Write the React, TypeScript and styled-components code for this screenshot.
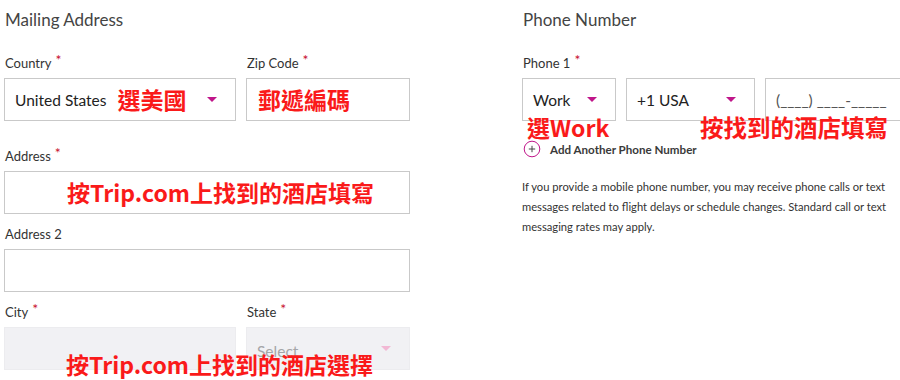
import React from 'react';
import styled, { createGlobalStyle } from 'styled-components';

const GlobalStyle = createGlobalStyle`
  body {
    margin: 0;
    background: #fff;
    font-family: Lato, "Noto Sans", sans-serif;
    color: #333;
  }
`;

const Page = styled.div`
  display: flex;
  gap: 112px;
  padding-left: 4px;
  width: 900px;
  height: 380px;
  overflow: hidden;
  box-sizing: border-box;
`;

const Column = styled.div<{ $width: number }>`
  width: ${(p) => p.$width}px;
  display: flex;
  flex-direction: column;
`;

const Title = styled.h2`
  margin: 10px 0 0 1px;
  font-size: 17px;
  line-height: 20px;
  font-weight: 400;
  color: #444;
`;

const Row = styled.div<{ $cols: string; $top: number }>`
  position: relative;
  display: grid;
  grid-template-columns: ${(p) => p.$cols};
  column-gap: 10px;
  margin-top: ${(p) => p.$top}px;
`;

const Field = styled.div`
  display: flex;
  flex-direction: column;
`;

const Label = styled.label`
  font-size: 13px;
  line-height: 16px;
  height: 16px;
  margin: 0 0 7px 1px;
  color: #333;
`;

const Star = styled.span`
  color: #c8102e;
  font-size: 14px;
  margin-left: 4px;
  position: relative;
  top: -3px;
`;

const Box = styled.div<{ $disabled?: boolean; $pad?: number }>`
  height: 43px;
  box-sizing: border-box;
  display: flex;
  align-items: center;
  padding: 0 18px 0 ${(p) => p.$pad ?? 10}px;
  border: 1px solid ${(p) => (p.$disabled ? '#ececef' : '#c9c9c9')};
  background: ${(p) => (p.$disabled ? '#f1f1f4' : '#fff')};
  font-size: 15.5px;
  color: #222;
`;

const Placeholder = styled.span<{ $muted?: boolean }>`
  color: ${(p) => (p.$muted ? '#a5a5a8' : '#555')};
  padding-top: ${(p) => (p.$muted ? 4 : 0)}px;
  white-space: nowrap;
`;

const Caret = styled.span<{ $faded?: boolean }>`
  margin-left: auto;
  width: 0;
  height: 0;
  border-left: 5px solid transparent;
  border-right: 5px solid transparent;
  border-top: 5px solid ${(p) => (p.$faded ? '#f2b8d4' : '#c0168a')};
`;

const Note = styled.span<{ $size?: number }>`
  font-family: "Noto Sans CJK TC", "Noto Sans", sans-serif;
  font-weight: 700;
  color: #fa1a1a;
  font-size: ${(p) => p.$size ?? 23}px;
  line-height: 1;
  white-space: nowrap;
`;

const InlineNote = styled(Note)`
  margin-left: 11px;
`;

const FloatNote = styled(Note)<{ $left: number; $top: number }>`
  position: absolute;
  left: ${(p) => p.$left}px;
  top: ${(p) => p.$top}px;
`;

const AddRow = styled.div`
  display: flex;
  align-items: center;
  gap: 9px;
  margin: 19px 0 0 1px;
  font-size: 11.6px;
  font-weight: 700;
  color: #3a3a3a;
`;

const Info = styled.p`
  margin: 19px 0 0 0;
  font-size: 11.2px;
  line-height: 20px;
  color: #333;
`;

const PlusCircle = () => (
  <svg width="18" height="18" viewBox="0 0 18 18">
    <circle cx="9" cy="9" r="7.8" fill="none" stroke="#c0168a" strokeWidth="1" />
    <path d="M9 5.8v6.4M5.8 9h6.4" stroke="#444" strokeWidth="1" />
  </svg>
);

export default function App() {
  return (
    <>
      <GlobalStyle />
      <Page>
        <Column $width={406}>
          <Title>Mailing Address</Title>
          <Row $cols="232px 1fr" $top={25}>
            <Field>
              <Label>
                Country<Star>*</Star>
              </Label>
              <Box>
                United States
                <InlineNote>選美國</InlineNote>
                <Caret />
              </Box>
            </Field>
            <Field>
              <Label>
                Zip Code<Star>*</Star>
              </Label>
              <Box $pad={11}>
                <Note>郵遞編碼</Note>
              </Box>
            </Field>
          </Row>
          <Row $cols="1fr" $top={27}>
            <Field>
              <Label>
                Address<Star>*</Star>
              </Label>
              <Box $pad={62}>
                <Note $size={23}>按Trip.com上找到的酒店填寫</Note>
              </Box>
            </Field>
          </Row>
          <Row $cols="1fr" $top={12}>
            <Field>
              <Label>Address 2</Label>
              <Box />
            </Field>
          </Row>
          <Row $cols="232px 1fr" $top={12}>
            <Field>
              <Label>
                City<Star>*</Star>
              </Label>
              <Box $disabled />
            </Field>
            <Field>
              <Label>
                State<Star>*</Star>
              </Label>
              <Box $disabled>
                <Placeholder $muted>Select</Placeholder>
                <Caret $faded />
              </Box>
            </Field>
            <FloatNote $size={23} $left={62} $top={49}>
              按Trip.com上找到的酒店選擇
            </FloatNote>
          </Row>
        </Column>
        <Column $width={372}>
          <Title>Phone Number</Title>
          <Row $cols="94px 129px 1fr" $top={25}>
            <Field>
              <Label>
                Phone 1<Star>*</Star>
              </Label>
              <Box>
                Work
                <Caret />
              </Box>
            </Field>
            <Field>
              <Label>&nbsp;</Label>
              <Box>
                +1 USA
                <Caret />
              </Box>
            </Field>
            <Field>
              <Label>&nbsp;</Label>
              <Box>
                <Placeholder>(____) ____-_____</Placeholder>
              </Box>
            </Field>
            <FloatNote $left={5} $top={61}>
              選Work
            </FloatNote>
            <FloatNote $size={23.5} $left={178} $top={61}>
              按找到的酒店填寫
            </FloatNote>
          </Row>
          <AddRow>
            <PlusCircle />
            Add Another Phone Number
          </AddRow>
          <Info>
            If you provide a mobile phone number, you may receive phone calls or text messages related to
            flight delays or schedule changes. Standard call or text messaging rates may apply.
          </Info>
        </Column>
      </Page>
    </>
  );
}
